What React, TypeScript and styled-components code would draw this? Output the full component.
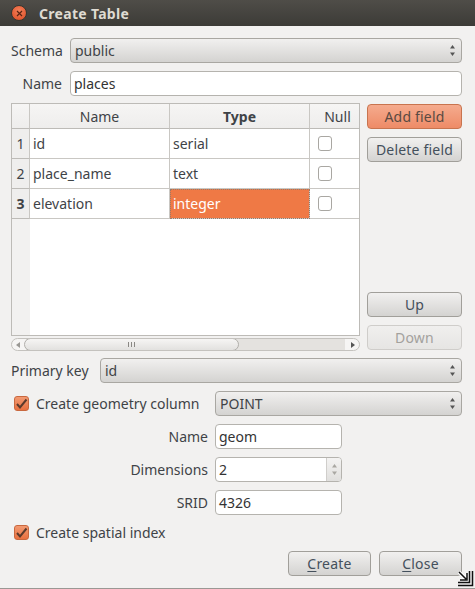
import React from 'react'
import styled, { createGlobalStyle } from 'styled-components'

const GlobalStyle = createGlobalStyle`
  html, body {
    margin: 0;
    padding: 0;
    background: #f2f1f0;
  }
  * {
    box-sizing: border-box;
  }
`

const Dialog = styled.div`
  position: relative;
  width: 475px;
  height: 589px;
  display: flex;
  flex-direction: column;
  background: #f2f1f0;
  border-bottom: 1px solid #9a9894;
  font-family: "Noto Sans", "Open Sans", sans-serif;
  font-size: 14px;
  color: #3f4347;
  overflow: hidden;
`

const TitleBar = styled.div`
  height: 26px;
  flex: none;
  display: flex;
  align-items: center;
  gap: 12px;
  padding-left: 11px;
  background: linear-gradient(#4f4d48, #3c3b37);
  color: #dfdbd2;
  font-weight: 700;
  font-size: 14px;
  letter-spacing: 0.3px;
`

const CloseDot = styled.span`
  width: 16px;
  height: 16px;
  border-radius: 50%;
  background: radial-gradient(circle at 50% 35%, #f4805a, #dc4a22);
  border: 1px solid #38362f;
  display: flex;
  align-items: center;
  justify-content: center;
`

const Body = styled.div`
  flex: 1;
  display: flex;
  flex-direction: column;
  padding: 12px 13px 0 11px;
`

const Row = styled.div<{ $top?: number }>`
  display: flex;
  align-items: center;
  margin-top: ${p => p.$top ?? 8}px;
`

const Label = styled.span<{ $width?: number }>`
  width: ${p => p.$width ?? 59}px;
  flex: none;
  text-align: ${p => (p.$width ? 'left' : 'right')};
  padding-right: ${p => (p.$width ? 0 : 8)}px;
`

const RightLabel = styled.span`
  width: 204px;
  flex: none;
  text-align: right;
  padding-right: 7px;
`

const Combo = styled.div`
  flex: 1;
  height: 25px;
  display: flex;
  align-items: center;
  justify-content: space-between;
  padding: 0 5px 0 4px;
  border: 1px solid #a9a7a2;
  border-radius: 4px;
  background: linear-gradient(#f1f0ef, #d4d3d1);
`

const Field = styled.div<{ $width?: number }>`
  ${p => (p.$width ? `width: ${p.$width}px;` : 'flex: 1;')}
  height: 25px;
  display: flex;
  align-items: center;
  padding-left: 3px;
  background: #fff;
  border: 1px solid #b5b3ae;
  border-radius: 4px;
  color: #333;
`

const TableRow = styled.div`
  display: flex;
  gap: 7px;
  margin-top: 7px;
`

const TableColumn = styled.div`
  width: 349px;
  flex: none;
`

const TableFrame = styled.div`
  height: 233px;
  border: 1px solid #bdbbb7;
  background: linear-gradient(to right, #f2f1f0 18px, #fff 18px);
`

const Grid = styled.div<{ $rowHeight: number }>`
  display: grid;
  grid-template-columns: 18px 140px 140px 49px;
  grid-auto-rows: ${p => p.$rowHeight}px;
`

const HeadCell = styled.div<{ $bold?: boolean; $shift?: number }>`
  display: flex;
  align-items: center;
  justify-content: center;
  padding-left: ${p => p.$shift ?? 0}px;
  background: linear-gradient(#f6f5f4, #eeedec);
  border-right: 1px solid #c9c7c3;
  border-bottom: 1px solid #bdbbb7;
  font-weight: ${p => (p.$bold ? 700 : 400)};
  &:last-child {
    border-right: none;
  }
`

const RowHead = styled(HeadCell)`
  background: #efeeed;
`

const Cell = styled.div<{ $selected?: boolean }>`
  display: flex;
  align-items: center;
  padding-left: 3px;
  background: ${p => (p.$selected ? '#ef7945' : '#fff')};
  color: ${p => (p.$selected ? '#fff' : '#3f4347')};
  border-right: 1px solid #c9c7c3;
  border-bottom: 1px solid #c9c7c3;
  ${p => p.$selected && 'outline: 1px dotted #9a7a68; outline-offset: -1px;'}
`

const CheckCell = styled.div`
  display: flex;
  align-items: center;
  padding-left: 8px;
  background: #fff;
  border-bottom: 1px solid #c9c7c3;
`

const EmptyBox = styled.span`
  width: 14px;
  height: 15px;
  background: #fff;
  border: 1px solid #a9a7a2;
  border-radius: 3px;
`

const ScrollBar = styled.div`
  height: 13px;
  margin-top: 2px;
  display: flex;
  align-items: center;
  justify-content: space-between;
  padding: 0 4px;
  position: relative;
  background: linear-gradient(
    to right,
    #f6f5f4 14px,
    #e4e2df 14px,
    #e4e2df calc(100% - 14px),
    #f6f5f4 calc(100% - 14px)
  );
  border: 1px solid #c4c2be;
  border-radius: 7px;
  overflow: hidden;
`

const ScrollThumb = styled.span`
  position: absolute;
  left: 12px;
  top: -1px;
  width: 215px;
  height: 13px;
  display: flex;
  align-items: center;
  justify-content: center;
  gap: 2px;
  background: linear-gradient(#f6f5f4, #e2e1df);
  border: 1px solid #b0aeaa;
  border-radius: 7px;
`

const Grip = styled.i`
  width: 1px;
  height: 5px;
  background: #8a8884;
`

const Side = styled.div`
  flex: 1;
  display: flex;
  flex-direction: column;
  gap: 8px;
  padding: 1px 0 1px;
`

const Button = styled.button<{ $tone?: 'hot' | 'off' }>`
  width: 100%;
  height: 25px;
  padding: 0;
  font: inherit;
  letter-spacing: 0.2px;
  border-radius: 4px;
  border: 1px solid ${p => (p.$tone === 'hot' ? '#c8744f' : p.$tone === 'off' ? '#cfcdca' : '#a19f9a')};
  background: ${p =>
    p.$tone === 'hot'
      ? 'linear-gradient(#f5ab8e, #ee8b67)'
      : p.$tone === 'off'
        ? 'linear-gradient(#f0efee, #e6e5e3)'
        : 'linear-gradient(#f1f0ef, #d4d3d1)'};
  color: ${p => (p.$tone === 'off' ? '#a3a19d' : p.$tone === 'hot' ? '#5a4a42' : '#44505c')};
`

const Spring = styled.div`
  flex: 1;
`

const CheckLabel = styled.div<{ $width?: number }>`
  display: flex;
  align-items: center;
  gap: 7px;
  padding-left: 3px;
  ${p => p.$width && `width: ${p.$width}px; flex: none;`}
`

const CheckBox = styled.span`
  width: 15px;
  height: 15px;
  flex: none;
  border-radius: 3px;
  border: 1px solid #c9683f;
  background: linear-gradient(#f29a72, #e9703f);
  display: flex;
  align-items: center;
  justify-content: center;
`

const Footer = styled.div`
  display: flex;
  justify-content: flex-end;
  gap: 8px;
  margin-top: 9px;
`

const FooterButton = styled(Button)`
  width: 83px;
  u {
    text-underline-offset: 2px;
  }
`

const ResizeGrip = styled.svg`
  position: absolute;
  right: 1px;
  bottom: 1px;
`

const Updown = styled.span`
  width: 15px;
  margin-left: auto;
  align-self: stretch;
  display: flex;
  align-items: center;
  justify-content: center;
  background: linear-gradient(#f4f3f2, #e0dfdd);
  border-left: 1px solid #d0cecb;
  border-radius: 0 3px 3px 0;
`

const Arrows = ({ color = '#555' }: { color?: string }) => (
  <svg width="7" height="13" viewBox="0 0 7 13">
    <path d="M3.5 1 L6 4.5 H1 Z" fill={color} />
    <path d="M1 8.5 H6 L3.5 12 Z" fill={color} />
  </svg>
)

const Check = () => (
  <svg width="13" height="12" viewBox="0 0 13 12">
    <path d="M2 6 L5 9.5 L11.5 1.5" fill="none" stroke="#5b3a2c" strokeWidth="2" />
  </svg>
)

const rows = [
  { id: 1, name: 'id', type: 'serial' },
  { id: 2, name: 'place_name', type: 'text' },
  { id: 3, name: 'elevation', type: 'integer' },
]

export default function App() {
  return (
    <Dialog>
      <GlobalStyle />
      <TitleBar>
        <CloseDot>
          <svg width="7" height="7" viewBox="0 0 7 7">
            <path d="M1 1 L6 6 M6 1 L1 6" stroke="#5a2412" strokeWidth="1.2" />
          </svg>
        </CloseDot>
        Create Table
      </TitleBar>
      <Body>
        <Row $top={0}>
          <Label>Schema</Label>
          <Combo>
            public
            <Arrows />
          </Combo>
        </Row>
        <Row>
          <Label>Name</Label>
          <Field>places</Field>
        </Row>

        <TableRow>
          <TableColumn>
            <TableFrame>
              <Grid $rowHeight={25}>
                <HeadCell />
                <HeadCell>Name</HeadCell>
                <HeadCell $bold>Type</HeadCell>
                <HeadCell $shift={6}>Null</HeadCell>
              </Grid>
              <Grid $rowHeight={30}>
                {rows.map(r => (
                  <React.Fragment key={r.id}>
                    <RowHead $bold={r.id === 3}>{r.id}</RowHead>
                    <Cell>{r.name}</Cell>
                    <Cell $selected={r.id === 3}>{r.type}</Cell>
                    <CheckCell>
                      <EmptyBox />
                    </CheckCell>
                  </React.Fragment>
                ))}
              </Grid>
            </TableFrame>
            <ScrollBar>
              <svg width="4" height="6" viewBox="0 0 4 6">
                <path d="M4 0 V6 L0 3 Z" fill="#9a9894" />
              </svg>
              <ScrollThumb>
                <Grip />
                <Grip />
                <Grip />
              </ScrollThumb>
              <svg width="4" height="6" viewBox="0 0 4 6">
                <path d="M0 0 V6 L4 3 Z" fill="#555" />
              </svg>
            </ScrollBar>
          </TableColumn>
          <Side>
            <Button $tone="hot">Add field</Button>
            <Button>Delete field</Button>
            <Spring />
            <Button>Up</Button>
            <Button $tone="off">Down</Button>
          </Side>
        </TableRow>

        <Row $top={7}>
          <Label $width={89}>Primary key</Label>
          <Combo>
            id
            <Arrows />
          </Combo>
        </Row>
        <Row>
          <CheckLabel $width={204}>
            <CheckBox>
              <Check />
            </CheckBox>
            Create geometry column
          </CheckLabel>
          <Combo>
            POINT
            <Arrows />
          </Combo>
        </Row>
        <Row>
          <RightLabel>Name</RightLabel>
          <Field $width={127}>geom</Field>
        </Row>
        <Row>
          <RightLabel>Dimensions</RightLabel>
          <Field $width={127}>
            2
            <Updown>
              <Arrows color="#a9a7a2" />
            </Updown>
          </Field>
        </Row>
        <Row>
          <RightLabel>SRID</RightLabel>
          <Field $width={127}>4326</Field>
        </Row>
        <Row>
          <CheckLabel>
            <CheckBox>
              <Check />
            </CheckBox>
            Create spatial index
          </CheckLabel>
        </Row>
        <Footer>
          <FooterButton>
            <u>C</u>reate
          </FooterButton>
          <FooterButton>
            <u>C</u>lose
          </FooterButton>
        </Footer>
      </Body>
      <ResizeGrip width="17" height="17" viewBox="0 0 17 17">
        <path d="M2 2 L9 9 M10 3 V10 H3" fill="none" stroke="#fff" strokeWidth="3.5" />
        <path d="M2 2 L9 9 M10 3 V10 H3" fill="none" stroke="#111" strokeWidth="1.5" />
        <path d="M1 12.5 H12.5 V1 M1 15.5 H15.5 V1" fill="none" stroke="#111" strokeWidth="1.5" />
      </ResizeGrip>
    </Dialog>
  )
}
